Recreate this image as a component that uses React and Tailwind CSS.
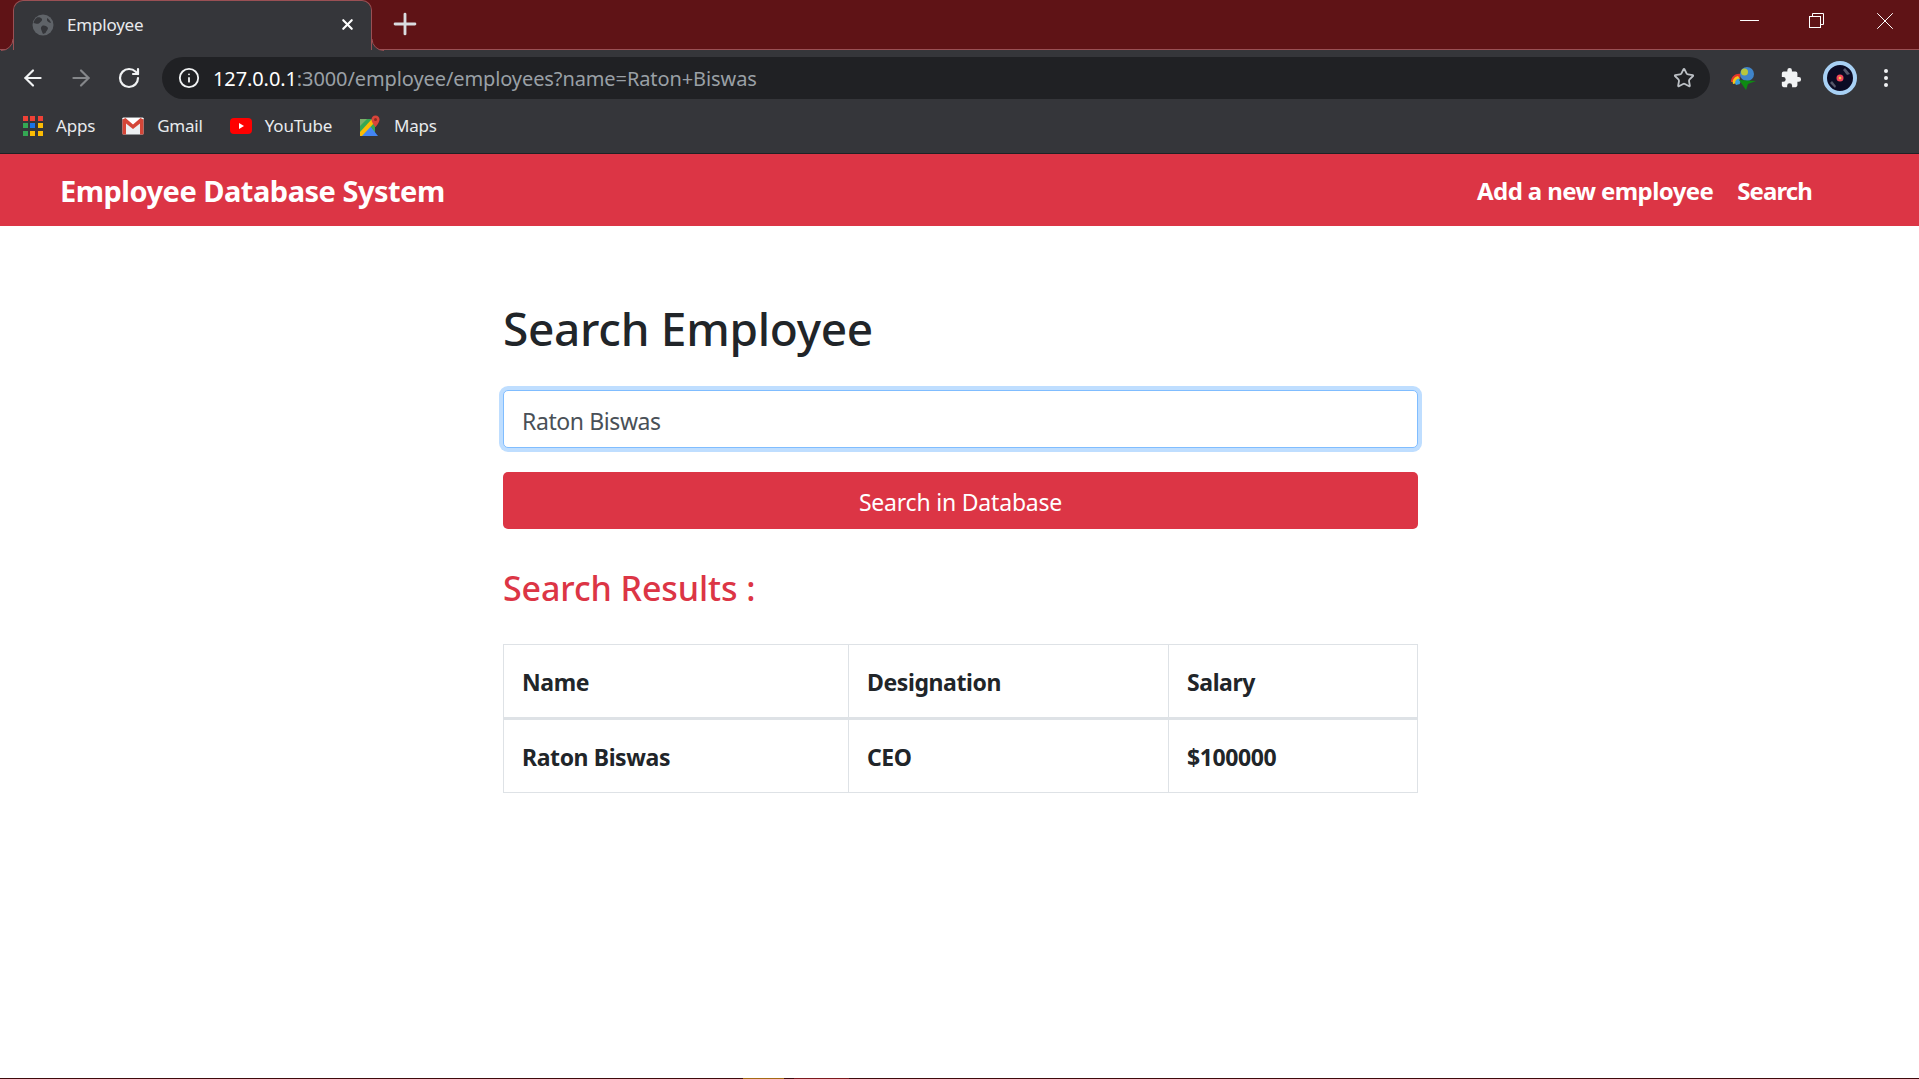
import React from 'react';
import { ArrowLeft, ArrowRight, RotateCw, Info, Star, X, Plus, Minus } from 'lucide-react';

const FONT = "font-['Noto_Sans','Open_Sans',sans-serif]";

function AppsIcon() {
  const colors = ['#ef4136', '#ef4136', '#ef4136', '#34a853', '#1a73e8', '#fbbc04', '#34a853', '#fbbc04', '#fbbc04'];
  return (
    <div className="grid grid-cols-3 gap-[2px] w-5 h-5">
      {colors.map((c, i) => (
        <svg key={i} viewBox="0 0 5 5" className="w-[5px] h-[5px]"><rect width="5" height="5" fill={c} /></svg>
      ))}
    </div>
  );
}

function GmailIcon() {
  return (
    <svg width="22" height="18" viewBox="0 0 22 18">
      <rect x="0.5" y="0.5" width="21" height="17" rx="1" fill="#eceff1" />
      <path d="M0.5 2 L11 10 L21.5 2 V1 H0.5 Z" fill="#fff" />
      <path d="M0.5 17.5 V2.5 L3.5 1 L11 7.5 L18.5 1 L21.5 2.5 V17.5 H18 V6.5 L11 12 L4 6.5 V17.5 Z" fill="#d44638" />
    </svg>
  );
}

function YoutubeIcon() {
  return (
    <svg width="22" height="16" viewBox="0 0 22 16">
      <rect width="22" height="16" rx="4" fill="#f00" />
      <path d="M9 5 L14 8 L9 11 Z" fill="#fff" />
    </svg>
  );
}

function MapsIcon() {
  return (
    <svg width="22" height="22" viewBox="0 0 22 22">
      <path d="M1 4 L16 4 L16 21 L1 21 Z" fill="#34a853" />
      <path d="M1 21 L11 11 L19 21 Z" fill="#4285f4" />
      <path d="M1 17 L12 5 L16 5 L16 7 L3 21 L1 21 Z" fill="#fbbc04" />
      <path d="M1 4 H8 L1 11 Z" fill="#7bb06a" />
      <path d="M16.5 0.5 C14 0.5 12.5 2.3 12.5 4.4 C12.5 7.3 16.5 12 16.5 12 C16.5 12 20.5 7.3 20.5 4.4 C20.5 2.3 19 0.5 16.5 0.5 Z" fill="#d9453a" />
      <circle cx="16.5" cy="4.5" r="1.5" fill="#8e2a22" />
    </svg>
  );
}

function IdmIcon() {
  return (
    <svg width="26" height="24" viewBox="0 0 26 24">
      <path d="M1 16 C1 10 6 7 11 8 L10 12 C7 11 5 13 5 16 Z" fill="#e5352b" />
      <path d="M3 18 C2 14 4 11 8 10 L10 13 C8 13 7 15 7.5 17 Z" fill="#f5c518" />
      <path d="M6 19 C4 16 6 13 9 12.5 L11 16 C10 16 9.5 17 10 18 Z" fill="#3aa0e0" />
      <circle cx="17" cy="8" r="7" fill="#3f84c9" />
      <circle cx="14.5" cy="6" r="3.5" fill="#b9c63c" />
      <path d="M9 14 L26 15 L18 18 L16 24 Z" fill="#0e8a12" />
    </svg>
  );
}

function PuzzleIcon() {
  return (
    <svg width="22" height="22" viewBox="0 0 24 24">
      <path d="M20.5 11H19V7a2 2 0 0 0-2-2h-4V3.5a2.5 2.5 0 0 0-5 0V5H4a2 2 0 0 0-2 2v3.8h1.5a2.7 2.7 0 0 1 0 5.4H2V20a2 2 0 0 0 2 2h3.8v-1.5a2.7 2.7 0 0 1 5.4 0V22H17a2 2 0 0 0 2-2v-4h1.5a2.5 2.5 0 0 0 0-5z" fill="#f1f3f4" />
    </svg>
  );
}

function ProfileIcon() {
  return (
    <svg width="34" height="34" viewBox="0 0 34 34">
      <circle cx="17" cy="17" r="15" fill="#0b0b24" stroke="#a8d1f5" strokeWidth="4" />
      <path d="M22 7 L27 13 L24 14 L20 9 Z" fill="#55566a" />
      <path d="M7 22 L12 27 L13 25 L9 20 Z" fill="#55566a" />
      <circle cx="17" cy="17" r="3.5" fill="#f0455a" />
      <circle cx="17" cy="17" r="1.3" fill="#f7c948" />
    </svg>
  );
}

function RestoreIcon() {
  return (
    <svg width="16" height="16" viewBox="0 0 16 16" fill="none" stroke="#fff" strokeWidth="1">
      <rect x="0.5" y="3.5" width="11" height="11" />
      <path d="M3.5 3.5 V0.5 H14.5 V11.5 H11.5" />
    </svg>
  );
}

// default favicon: grey globe with darker land
function TabGlobe() {
  return (
    <svg width="22" height="22" viewBox="0 0 22 22" className="shrink-0">
      <circle cx="11" cy="11" r="10.5" fill="#5f6368" />
      <path d="M5 3.5 C7 3 9 3.5 10 5 C10.5 6.5 9 7.5 8 8.5 C7 10 5 10 3.5 9.5 L1.5 9 C2 7 3 5 5 3.5 Z" fill="#35363a" />
      <path d="M10 12 C12 11 15 12 16 14 C16 16 14 17 13.5 19 L11 20 C10 18 9.5 16 9 15 C8.8 14 9 13 10 12 Z" fill="#35363a" />
      <path d="M15 4 C17 5 18.5 7 19 9 C17.5 9 16 8 15 6.5 Z" fill="#35363a" />
    </svg>
  );
}

function TabCorner({ side }) {
  if (side === 'left') {
    return (
      <svg width="12" height="12" viewBox="0 0 12 12" className="absolute -left-[13px] -bottom-px">
        <path d="M12 0 A12 11.5 0 0 1 0 11.5 V12 H12 Z" fill="#35363a" />
        <path d="M12 0 A12 11.5 0 0 1 0 11.5" fill="none" stroke="#9a5054" />
      </svg>
    );
  }
  return (
    <svg width="12" height="12" viewBox="0 0 12 12" className="absolute -right-[13px] -bottom-px">
      <path d="M0 0 A12 11.5 0 0 0 12 11.5 V12 H0 Z" fill="#35363a" />
      <path d="M0 0 A12 11.5 0 0 0 12 11.5" fill="none" stroke="#9a5054" />
    </svg>
  );
}

function Bookmark({ icon, label }) {
  return (
    <div className="flex items-center gap-[13px] text-[17px] text-[#e8eaed] tracking-[-0.2px]">
      {icon}
      <span>{label}</span>
    </div>
  );
}

function BrowserChrome() {
  return (
    <div className="flex flex-col shrink-0">
      {/* title bar */}
      <div className="h-[50px] bg-[#5f1316] flex items-end border-b border-[#9a5054]">
        <div className="relative ml-[13px] w-[359px] h-[50px] -mb-px bg-[#35363a] rounded-t-[10px] border border-b-0 border-[#9a5054] flex items-center pl-[18px] pr-[15px] pb-[2px]">
          <TabCorner side="left" />
          <TabGlobe />
          <span className="ml-[13px] text-[17px] text-[#e8eaed] tracking-[-0.2px]">Employee</span>
          <X size={17} strokeWidth={3} className="ml-auto text-white" />
          <TabCorner side="right" />
        </div>
        <div className="flex items-center justify-center w-[20px] h-[50px] ml-[23px]">
          <Plus size={34} strokeWidth={2} className="shrink-0 text-[#dadce0]" />
        </div>
        <div className="ml-auto h-[50px] flex items-start">
          <div className="w-[68px] h-[42px] flex items-center justify-center"><Minus size={31} strokeWidth={0.8} className="text-white" /></div>
          <div className="w-[68px] h-[43px] flex items-center justify-center"><RestoreIcon /></div>
          <div className="w-[68px] h-[43px] flex items-center justify-center"><X size={30} strokeWidth={0.8} className="text-white" /></div>
        </div>
      </div>
      {/* toolbar */}
      <div className="h-[54px] bg-[#35363a] flex items-center pt-[2px] pl-[20px] pr-[31px]">
        <ArrowLeft size={26} strokeWidth={2} className="text-[#f1f3f4]" />
        <ArrowRight size={26} strokeWidth={2} className="ml-[22px] text-[#85878a]" />
        <RotateCw size={24} strokeWidth={2.2} className="ml-[23px] text-[#f1f3f4]" />
        <div className="ml-[21px] flex-1 h-[42px] rounded-full bg-[#202124] flex items-center pl-[16px] pr-[15px]">
          <Info size={22} strokeWidth={2} className="text-[#f1f3f4]" />
          <div className="ml-[13px] pt-[1px] text-[20px] tracking-[-0.1px] whitespace-nowrap">
            <span className="text-white">127.0.0.1</span>
            <span className="text-[#9aa0a6]">:3000/employee/employees?name=Raton+Biswas</span>
          </div>
          <Star size={22} strokeWidth={2} className="ml-auto text-[#bdc1c6]" />
        </div>
        <div className="ml-[20px] w-[26px] flex justify-center"><IdmIcon /></div>
        <div className="ml-[24px] flex"><PuzzleIcon /></div>
        <div className="ml-[21px] flex"><ProfileIcon /></div>
        <div className="ml-[27px] flex flex-col gap-[3px]">
          <div className="w-1 h-1 rounded-full bg-[#f1f3f4]" />
          <div className="w-1 h-1 rounded-full bg-[#f1f3f4]" />
          <div className="w-1 h-1 rounded-full bg-[#f1f3f4]" />
        </div>
      </div>
      {/* bookmarks */}
      <div className="h-[50px] bg-[#35363a] border-b border-[#202124] flex items-center pl-[23px] pb-[5px] gap-[27px]">
        <Bookmark icon={<AppsIcon />} label="Apps" />
        <Bookmark icon={<GmailIcon />} label="Gmail" />
        <Bookmark icon={<YoutubeIcon />} label="YouTube" />
        <Bookmark icon={<MapsIcon />} label="Maps" />
      </div>
    </div>
  );
}

export default function App() {
  return (
    <div className={`${FONT} h-screen bg-white flex flex-col overflow-hidden`}>
      <BrowserChrome />

      <nav className="h-[72px] shrink-0 bg-[#dc3545] flex items-center justify-between pt-[2px] pl-[60px] pr-[107px] text-white font-bold">
        <span className="text-[29px] tracking-[-0.5px]">Employee Database System</span>
        <div className="flex items-center gap-[24px] text-[24px] tracking-[-0.6px]">
          <span>Add a new employee</span>
          <span className="tracking-[-0.9px]">Search</span>
        </div>
      </nav>

      <main className="flex-1 w-[915px] ml-[503px] pt-[73px] text-[#212529]">
        <h1 className="text-[46px] leading-[58px] font-medium tracking-[-0.3px]">Search Employee</h1>

        <div className="mt-[33px] h-[58px] rounded-[5px] border border-[#80bdff] ring-4 ring-[#bfdeff] bg-white flex items-center pl-[18px] pt-[4px] text-[23px] text-[#495057] tracking-[-0.4px]">
          Raton Biswas
        </div>

        <div className="mt-[24px] h-[57px] rounded-[5px] bg-[#dc3545] text-white text-[23px] tracking-[-0.2px] flex items-center justify-center pt-[4px]">
          Search in Database
        </div>

        <h3 className="mt-[38px] text-[#dc3545] text-[34px] leading-[42px] font-medium tracking-[-0.1px]">Search Results :</h3>

        <table className="mt-[35px] w-full border-collapse table-fixed font-bold text-[23px] tracking-[-0.4px]">
          <colgroup>
            <col className="w-[345px]" />
            <col className="w-[320px]" />
            <col />
          </colgroup>
          <thead>
            <tr className="h-[74px]">
              <th className="text-left font-bold pl-[18px] pt-[2px] border border-[#dee2e6] border-b-[3px]">Name</th>
              <th className="text-left font-bold pl-[18px] pt-[2px] border border-[#dee2e6] border-b-[3px]">Designation</th>
              <th className="text-left font-bold pl-[18px] pt-[2px] border border-[#dee2e6] border-b-[3px]">Salary</th>
            </tr>
          </thead>
          <tbody>
            <tr className="h-[74px]">
              <td className="pl-[18px] pt-[2px] border border-[#dee2e6]">Raton Biswas</td>
              <td className="pl-[18px] pt-[2px] border border-[#dee2e6]">CEO</td>
              <td className="pl-[18px] pt-[2px] border border-[#dee2e6]">$100000</td>
            </tr>
          </tbody>
        </table>
      </main>

      {/* edge of the taskbar */}
      <div className="h-[1px] shrink-0 bg-[#3f0a0c] flex">
        <div className="w-[743px]" />
        <div className="w-[41px] bg-[#a56a14]" />
        <div className="w-[10px]" />
        <div className="w-[55px] bg-[#7d1a1d]" />
      </div>
    </div>
  );
}
